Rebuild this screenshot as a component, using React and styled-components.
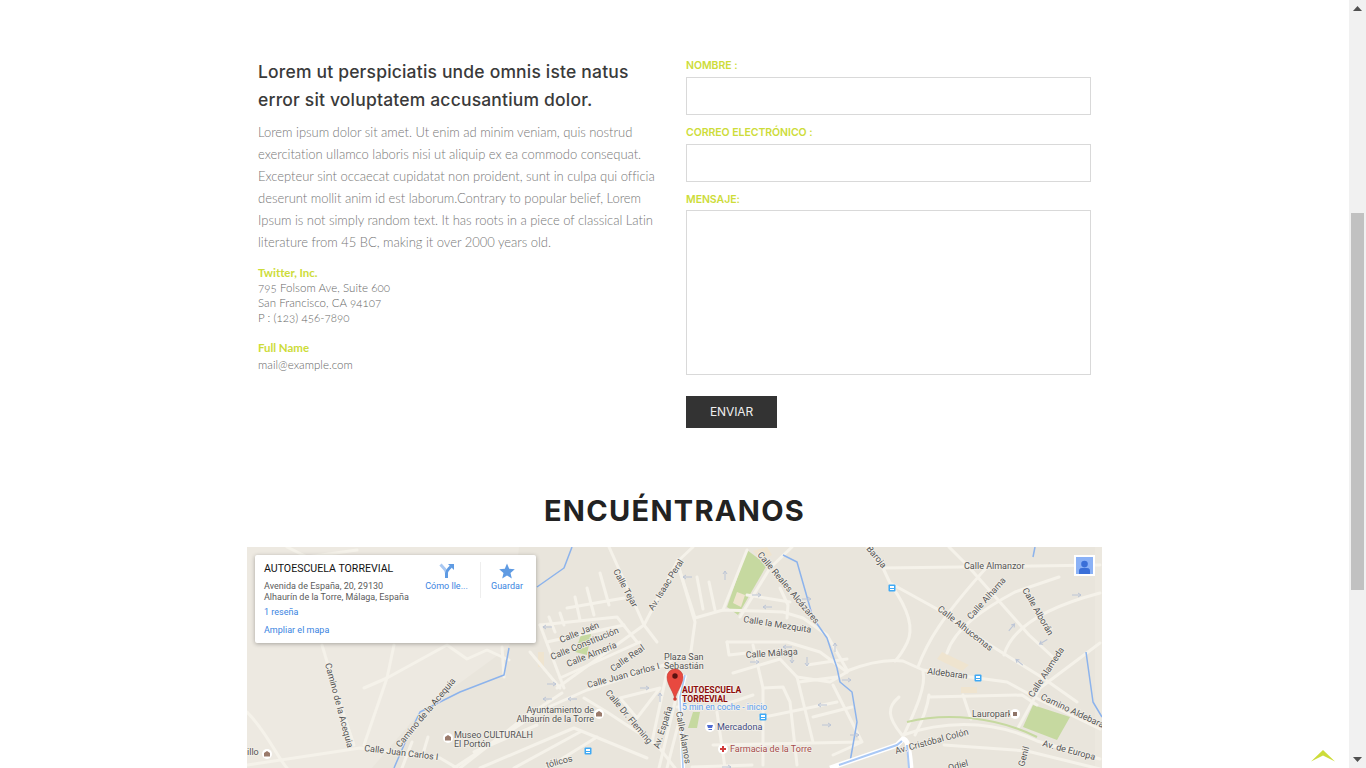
import React from "react";
import styled, { createGlobalStyle } from "styled-components";

const Global = createGlobalStyle`
  html, body { margin: 0; padding: 0; background: #fff; overflow: hidden; }
  * { box-sizing: border-box; }
`;

const Page = styled.div`
  display: flex;
  width: 1366px;
  height: 768px;
  overflow: hidden;
  position: relative;
  background: #fff;
`;
const Main = styled.main`
  flex: 1;
  min-width: 0;
`;
const Container = styled.div`
  width: 855px;
  margin: 0 auto;
`;
const ContactRow = styled.section`
  display: grid;
  grid-template-columns: 428px 427px;
  padding-top: 55px;
`;
const InfoColumn = styled.div`
  padding: 3px 0 0 11px;
`;
const Lead = styled.h2`
  margin: 0 0 7px;
  font: 500 17.5px/28px "Inter", sans-serif;
  letter-spacing: 0.18px;
  color: #3a3a3a;
`;
const Line = styled.span`
  display: block;
  white-space: nowrap;
`;
const Body = styled.p`
  margin: 0 0 12px;
  font: 300 13px/22px "Lato", sans-serif;
  letter-spacing: -0.03px;
  color: #777;
`;
const Highlight = styled.div`
  font: 700 11.5px/15px "Lato", sans-serif;
  letter-spacing: -0.05px;
  color: #cddc39;
  margin-top: ${(p) => p.$top || 0}px;
`;
const Address = styled.address`
  font: 300 11.5px/15px "Lato", sans-serif;
  font-style: normal;
  letter-spacing: 0.04px;
  color: #666;
  margin-top: ${(p) => p.$top || 0}px;
  font-variant-numeric: oldstyle-nums;
`;
const FormColumn = styled.form`
  padding-left: 11px;
  width: 416px;
`;
const Field = styled.div`
  display: flex;
  flex-direction: column;
  gap: ${(p) => p.$gap}px;
  margin-bottom: 7px;
`;
const FieldLabel = styled.label`
  padding-top: 2px;
  font: 600 10.5px/18px "Inter", sans-serif;
  letter-spacing: -0.05px;
  color: #cddc39;
  text-transform: uppercase;
`;
const TextInput = styled.input`
  display: block;
  width: 405px;
  height: 38px;
  border: 1px solid #d9d9d9;
  background: #fff;
  padding: 0 8px;
  outline: none;
`;
const TextArea = styled.textarea`
  display: block;
  width: 405px;
  height: 165px;
  border: 1px solid #d9d9d9;
  background: #fff;
  padding: 8px;
  resize: none;
  outline: none;
`;
const Submit = styled.button`
  display: block;
  width: 91px;
  height: 32px;
  margin-top: 21px;
  border: 0;
  background: #333;
  color: #eee;
  font: 400 12px/32px "Inter", sans-serif;
  letter-spacing: -0.1px;
  padding: 0;
`;
const SectionTitle = styled.h3`
  margin: 63px 0 16px;
  text-align: center;
  font: 700 29px/40px "Inter", sans-serif;
  letter-spacing: 1.3px;
  color: #222;
`;
const MapFrame = styled.div`
  position: relative;
  width: 855px;
  height: 221px;
  overflow: hidden;
  background: #e9e5dc;
`;
const MapSvg = styled.svg`
  display: block;
`;
const PlaceCard = styled.div`
  position: absolute;
  left: 8px;
  top: 8px;
  width: 281px;
  height: 88px;
  background: #fff;
  border-radius: 2px;
  box-shadow: 0 1px 4px rgba(0, 0, 0, 0.3);
  display: flex;
  justify-content: space-between;
  padding: 7px 0 0 9px;
  font-family: "Roboto", sans-serif;
`;
const PlaceInfo = styled.div`
  display: flex;
  flex-direction: column;
`;
const PlaceName = styled.div`
  font: 400 10.6px/13px "Roboto", sans-serif;
  color: #111;
  margin-bottom: 6px;
  white-space: nowrap;
`;
const PlaceAddress = styled.div`
  font: 400 9px/11px "Roboto", sans-serif;
  color: #5b5b5b;
  white-space: nowrap;
`;
const PlaceLink = styled.a`
  font: 400 9px/11px "Roboto", sans-serif;
  color: #3a84df;
  margin-top: ${(p) => p.$top}px;
  white-space: nowrap;
`;
const ActionGroup = styled.div`
  display: flex;
  align-items: flex-start;
  width: 111px;
`;
const Action = styled.div`
  width: ${(p) => p.$w}px;
  padding-right: ${(p) => p.$inset}px;
  padding-top: 1px;
  display: flex;
  flex-direction: column;
  align-items: center;
  gap: 2px;
  font: 400 9px/11px "Roboto", sans-serif;
  color: #3a84df;
  white-space: nowrap;
  height: 36px;
  border-left: ${(p) => (p.$divided ? "1px solid #eee" : "0")};
`;
const PersonButton = styled.div`
  position: absolute;
  top: 8px;
  right: 7px;
  width: 21px;
  height: 21px;
  background: #8ab1f6;
  border: 2px solid #fff;
  display: flex;
  align-items: flex-end;
  justify-content: center;
`;
const ScrollBar = styled.aside`
  width: 17px;
  height: 768px;
  background: #f1f1f1;
  display: flex;
  flex-direction: column;
  align-items: center;
  flex: none;
`;
const ScrollArrow = styled.div`
  height: 17px;
  flex: none;
  display: flex;
  align-items: center;
  justify-content: center;
`;
const ScrollTrack = styled.div`
  flex: 1;
  width: 100%;
  padding: 196px 2px 161px;
  display: flex;
`;
const ScrollThumb = styled.div`
  flex: 1;
  background: #c1c1c1;
`;
const BackToTop = styled.svg`
  position: absolute;
  left: 1311px;
  top: 749px;
`;

const roads = [
  // NE district
  "M620 0L636 21L853 18",
  "M636 21L643 36L690 62L743 98L796 131L830 155",
  "M644 38C660 60 668 80 660 96C656 104 652 110 648 114",
  "M600 124C620 116 640 112 656 114L676 123L723 130L760 135L793 153L853 182",
  "M671 120C680 95 695 70 740 20",
  "M702 0L720 18L782 88L808 112",
  "M700 106C708 80 740 60 768 45L812 30",
  "M757 108C765 80 800 60 853 46",
  "M771 181L793 141L853 96",
  "M655 188C640 170 640 160 652 150",
  "M676 125C680 140 665 170 656 190",
  "M682 150L775 148L790 158",
  "M682 148C680 165 672 180 668 188",
  "M716 148L724 172",
  "M656 188C690 176 740 170 790 194L853 212",
  "M697 198L780 204L853 222",
  // Centre-north
  "M448 71L476 63L536 65L556 71L580 88L600 123",
  "M476 63L500 3",
  "M493 70L523 21L545 0",
  "M533 41L541 58L540 71",
  "M431 18L448 75L443 111",
  "M500 48L543 55",
  "M448 71L430 15L446 0",
  "M450 30L456 62",
  "M462 35L468 63",
  // Malaga loop
  "M480 95L540 95L573 105L600 125",
  "M480 95L482 108L500 106",
  "M486 126L533 112L550 130L583 135L600 125",
  "M506 98L516 141L536 140L543 155L550 218",
  "M516 141L516 218",
  "M550 130L566 195",
  "M586 138L615 195L586 208",
  "M513 171L590 155",
  "M466 198L613 195",
  "M445 220L505 218",
  "M560 118L600 112",
  "M566 170L605 160",
  "M552 135L590 130",
  // Pin quarter
  "M430 160L470 160L506 148",
  "M470 165L478 221",
  // Streets by Jaen
  "M293 78L370 70L390 95",
  "M300 95L377 78",
  "M313 131L393 95",
  "M293 78L317 141",
  "M302 70L308 85",
  "M313 66L317 78",
  "M328 50L333 73",
  "M340 41L347 68",
  "M353 26L362 58",
  "M320 61L377 51",
  "M397 78L410 95",
  "M362 0L397 78L430 15",
  "M397 78L310 141",
  "M283 105L313 141",
  // Juan Carlos
  "M277 171L340 143L417 118L430 110",
  "M213 221L277 171",
  "M277 171L315 146",
  "M337 151L360 165L410 198L428 221",
  "M373 151L390 171L413 141L373 151",
  "M233 221L327 181L400 211",
  "M227 205L290 178",
  "M207 221L280 173",
  "M267 221L333 185",
  "M300 221L350 190",
  "M428 155L412 221",
  "M437 155L420 221",
  "M420 125L405 195",
  // Left countryside
  "M0 218L67 208L113 201L193 211L210 221",
  "M75 98L87 138L107 198",
  "M147 98L140 131L117 198",
  "M117 141L140 131L200 98L220 112L240 103L262 113",
  "M0 165C20 185 30 210 40 221",
  "M155 221L165 195",
  "M255 100L257 130",
  "M175 210L181 190",
  "M40 0L60 10L110 3",
];
const greens = [
  "M500 3L520 18L491 68L480 60Z",
  "M786 158L823 170L810 193L776 180Z",
  "M446 165L453 165L450 181L441 181Z",
  "M335 85L345 82L340 108L328 105Z",
];
const sand = [
  "M695 105L722 118L715 124L690 112Z",
  "M291 105L297 105L297 120L291 120Z",
  "M506 4L520 0L525 8L514 14Z",
  "M490 45L498 48L494 60L486 56Z",
  "M714 140L730 140L730 146L714 146Z",
];
const water = [
  "M325 0L317 21L290 40",
  "M262 101L257 128L213 145L173 165L157 198L147 221",
  "M536 8L550 15L566 71L580 91L590 121L593 135L605 145L610 175L603 215",
  "M788 0L786 10",
  "M839 105L846 155L855 170",
];
const arrows = [
  [560, 52, 0], [520, 60, 180], [540, 100, 180], [600, 133, 0], [575, 158, 180], [580, 178, 0], [608, 188, 0],
  [300, 80, 180], [305, 137, 0], [300, 152, 180], [325, 152, 180], [398, 141, 0], [413, 150, 270], [545, 112, 90],
  [510, 48, 0], [478, 28, 270], [440, 30, 180], [796, 95, 150], [830, 48, 0], [765, 80, 310], [772, 115, 220], [480, 220, 0],
  [588, 100, 270], [560, 115, 90], [508, 115, 0],
];
const labels = [
  ["Calle Real", 366, 125, -35],
  ["Calle Jaén", 314, 96, -22],
  ["Calle Constitución", 305, 113, -22],
  ["Calle Almería", 321, 120, -22],
  ["Calle Juan Carlos I", 341, 141, -15],
  ["Calle Tejar", 366, 24, 62],
  ["Av. Isaac Peral", 406, 64, -58],
  ["Calle Reales Alcázares", 510, 8, 50],
  ["Baroja", 619, 2, 50],
  ["Calle Almanzor", 717, 22, 0],
  ["Calle Alhama", 724, 73, -48],
  ["Calle Alhucemas", 690, 63, 38],
  ["Calle Alborán", 775, 43, 60],
  ["Calle la Mezquita", 496, 75, 9],
  ["Calle Málaga", 499, 111, -4],
  ["Aldebaran", 680, 127, 7],
  ["Calle Alameda", 786, 151, -57],
  ["Camino Aldebaran", 793, 152, 25],
  ["Av. Cristóbal Colón", 649, 207, -15],
  ["Av. de Europa", 795, 199, 15],
  ["Genil", 777, 220, -75],
  ["Camino de la Acequia", 78, 117, 75],
  ["Camino de la Acequia", 153, 201, -50],
  ["Calle Juan Carlos I", 117, 204, 7],
  ["Calle Dr. Fleming", 358, 146, 50],
  ["Av. España", 412, 202, -72],
  ["Calle Álamos", 429, 165, 80],
  ["Plaza San", 417, 113, 0],
  ["Sebastián", 417, 122, 0],
  ["Museo CULTURALH", 207, 191, 0],
  ["El Portón", 207, 200, 0],
  ["tólicos", 300, 221, -15],
  ["illo", 0, 208, 0],
  ["Odiel", 702, 224, -15],
];

const BusStop = ({ x, y }) => (
  <g transform={`translate(${x - 3.5} ${y - 3.5})`}>
    <rect width="7" height="7" rx="1" fill="#3fa9f5" />
    <rect x="1.5" y="1.5" width="4" height="2" fill="#fff" />
    <rect x="1.5" y="4.5" width="4" height="1" fill="#fff" />
  </g>
);

const IconDot = ({ x, y, color, children }) => (
  <g transform={`translate(${x} ${y})`}>
    <circle r="5" fill="#fff" />
    <g fill={color}>{children}</g>
  </g>
);

const MapDrawing = () => (
  <MapSvg width="855" height="221" viewBox="0 0 855 221">
    <rect width="855" height="221" fill="#e9e5dc" />
    <path d="M0 0H272L262 100L173 165L125 221H0Z" fill="#ede9e1" />
    <path d="M848 0H855V221H848Z" fill="#ece8df" />
    {greens.map((d) => <path key={d} d={d} fill="#c6d9a0" />)}
    {sand.map((d) => <path key={d} d={d} fill="#efe4cf" />)}
    <g fill="none" stroke="#f5f2ea" strokeWidth="3" strokeLinejoin="round" strokeLinecap="round">
      {roads.map((d) => <path key={d} d={d} />)}
    </g>
    <g fill="none" stroke="#8cb3ec" strokeWidth="1.5" strokeLinejoin="round">
      {water.map((d) => <path key={d} d={d} />)}
    </g>
    <path d="M583 221L650 198L656 192C660 192 662 198 664 221" fill="none" stroke="#fff" strokeWidth="5" />
    <path d="M592 218L650 198L655 194M660 198L662 221" fill="none" stroke="#a9c8f5" strokeWidth="2" />
    <path d="M438 128L433 150L436 221" fill="none" stroke="#fff" strokeWidth="4" />
    <path d="M438 128L433 150L436 221" fill="none" stroke="#a9c8f5" strokeWidth="1.6" />
    <path d="M660 175C700 165 750 170 790 190" fill="none" stroke="#c6d9a0" strokeWidth="2" />
    {arrows.map(([x, y, r], i) => (
      <g key={i} transform={`translate(${x} ${y}) rotate(${r})`} fill="none" stroke="#bcc5d6" strokeWidth="1">
        <path d="M-5 0H4M1 -2L4 0L1 2" />
      </g>
    ))}
    <g fill="#545454" stroke="#f2efe8" strokeWidth="1.6" paintOrder="stroke" fontFamily="Roboto, sans-serif" fontSize="9">
      {labels.map(([t, x, y, r]) => (
        <text key={t + x} x={x} y={y} transform={`rotate(${r} ${x} ${y})`}>{t}</text>
      ))}
      <text x="347" y="166" textAnchor="end">Ayuntamiento de</text>
      <text x="347" y="174.500" textAnchor="end">Alhaurín de la Torre</text>
      <text x="725" y="170">Lauropark</text>
    </g>
    <BusStop x={645} y={41} />
    <BusStop x={731} y={131} />
    <BusStop x={516} y={170} />
    <BusStop x={341} y={204} />
    <IconDot x={352} y={167} color="#9a7a6b"><path d="M-3 -1L0 -3L3 -1V2.500H-3Z" /></IconDot>
    <IconDot x={201} y={191} color="#9a7a6b"><path d="M-3 -1L0 -3L3 -1V2.500H-3Z" /></IconDot>
    <IconDot x={768} y={167} color="#8e7468"><rect x="-2" y="-2" width="4" height="4" /></IconDot>
    <IconDot x={20} y={207} color="#9a7a6b"><path d="M-3 -1L0 -3L3 -1V2.500H-3Z" /></IconDot>
    <IconDot x={463} y={180} color="#4f6bd1"><path d="M-3 -2H3L2 1H-2ZM-1.500 2H2V3H-1.500Z" /></IconDot>
    <IconDot x={476} y={202} color="#d13b3b"><path d="M-1 -3H1V-1H3V1H1V3H-1V1H-3V-1H-1Z" /></IconDot>
    <g stroke="#f4f1ea" strokeWidth="1.5" paintOrder="stroke" fontFamily="Roboto, sans-serif">
      <text x="470" y="183" fontSize="9" fill="#3f4a82">Mercadona</text>
      <text x="483" y="205" fontSize="9" fill="#a54c4c">Farmacia de la Torre</text>
      <text x="435" y="146" fontSize="8.600" fontWeight="700" fill="#8d0b0b">AUTOESCUELA</text>
      <text x="435" y="155" fontSize="8.600" fontWeight="700" fill="#8d0b0b">TORREVIAL</text>
      <text x="435" y="163" fontSize="8.600" fill="#5a9df0">5 min en coche - inicio</text>
    </g>
    <path d="M428 153C427 145 420 138 420 130A8 8 0 0 1 436 130C436 138 429 145 428 153Z" fill="#e8493f" stroke="#b8352d" strokeWidth="0.5" />
    <circle cx="428" cy="129" r="2.700" fill="#5a1210" />
    <circle cx="428" cy="152" r="1.800" fill="#d13b32" />
  </MapSvg>
);

const Directions = () => (
  <svg width="16" height="16" viewBox="0 0 16 16">
    <path d="M1.500 1.500L6 6.500C7.300 8 7.500 9 7.500 11V15" fill="none" stroke="#a9c8f2" strokeWidth="3" />
    <path d="M7.500 15V10.500C7.500 8.500 8.500 7 10 5.500L12 3.500" fill="none" stroke="#5f9be3" strokeWidth="3" />
    <path d="M9 1H15V7Z" fill="#5f9be3" />
  </svg>
);
const Star = () => (
  <svg width="16" height="16" viewBox="0 0 16 16">
    <path d="M8 .5L10.200 5.700L15.800 6.200L11.500 9.900L12.800 15.400L8 12.500L3.200 15.400L4.500 9.900L.2 6.200L5.800 5.700Z" fill="#5f9be3" />
  </svg>
);

export default function App() {
  return (
    <Page>
      <Global />
      <Main>
        <Container>
          <ContactRow>
            <InfoColumn>
              <Lead>
                <Line>Lorem ut perspiciatis unde omnis iste natus</Line>
                <Line>error sit voluptatem accusantium dolor.</Line>
              </Lead>
              <Body>
                <Line>Lorem ipsum dolor sit amet. Ut enim ad minim veniam, quis nostrud</Line>
                <Line>exercitation ullamco laboris nisi ut aliquip ex ea commodo consequat.</Line>
                <Line>Excepteur sint occaecat cupidatat non proident, sunt in culpa qui officia</Line>
                <Line>deserunt mollit anim id est laborum.Contrary to popular belief, Lorem</Line>
                <Line>Ipsum is not simply random text. It has roots in a piece of classical Latin</Line>
                <Line>literature from 45 BC, making it over 2000 years old.</Line>
              </Body>
              <Highlight>Twitter, Inc.</Highlight>
              <Address>
                <Line>795 Folsom Ave, Suite 600</Line>
                <Line>San Francisco, CA 94107</Line>
                <Line>P : (123) 456-7890</Line>
              </Address>
              <Highlight $top={15}>Full Name</Highlight>
              <Address $top={2}>mail@example.com</Address>
            </InfoColumn>
            <FormColumn>
              <Field $gap={2}>
                <FieldLabel>Nombre :</FieldLabel>
                <TextInput />
              </Field>
              <Field $gap={2}>
                <FieldLabel>Correo electrónico :</FieldLabel>
                <TextInput />
              </Field>
              <Field $gap={1}>
                <FieldLabel>Mensaje:</FieldLabel>
                <TextArea />
              </Field>
              <Submit type="button">ENVIAR</Submit>
            </FormColumn>
          </ContactRow>
          <SectionTitle>ENCUÉNTRANOS</SectionTitle>
          <MapFrame>
            <MapDrawing />
            <PlaceCard>
              <PlaceInfo>
                <PlaceName>AUTOESCUELA TORREVIAL</PlaceName>
                <PlaceAddress>Avenida de España, 20, 29130</PlaceAddress>
                <PlaceAddress>Alhaurín de la Torre, Málaga, España</PlaceAddress>
                <PlaceLink $top={4}>1 reseña</PlaceLink>
                <PlaceLink $top={7}>Ampliar el mapa</PlaceLink>
              </PlaceInfo>
              <ActionGroup>
                <Action $w={55} $inset={12}><Directions />Cómo lle...</Action>
                <Action $w={56} $inset={3} $divided><Star />Guardar</Action>
              </ActionGroup>
            </PlaceCard>
            <PersonButton>
              <svg width="13" height="15" viewBox="0 0 13 15">
                <circle cx="6.500" cy="5" r="3.300" fill="#3a6fd8" />
                <path d="M1 15V11.500C1 9.500 3 8.800 6.500 8.800S12 9.500 12 11.500V15Z" fill="#3a6fd8" />
              </svg>
            </PersonButton>
          </MapFrame>
        </Container>
      </Main>
      <ScrollBar>
        <ScrollArrow>
          <svg width="9" height="5" viewBox="0 0 9 5"><path d="M4.500 0L9 5H0Z" fill="#505050" /></svg>
        </ScrollArrow>
        <ScrollTrack><ScrollThumb /></ScrollTrack>
        <ScrollArrow>
          <svg width="9" height="5" viewBox="0 0 9 5"><path d="M0 0H9L4.500 5Z" fill="#505050" /></svg>
        </ScrollArrow>
      </ScrollBar>
      <BackToTop width="24" height="13" viewBox="0 0 24 13">
        <path d="M12 1L24 12.500L12 6.500L0 12.500Z" fill="#cddc39" />
      </BackToTop>
    </Page>
  );
}
